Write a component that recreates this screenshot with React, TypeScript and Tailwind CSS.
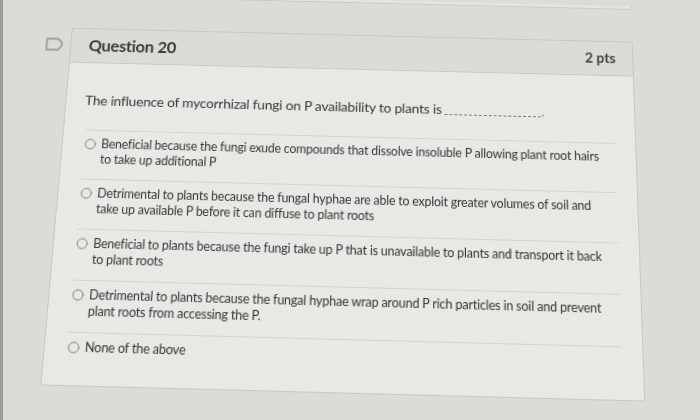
import { Circle } from 'lucide-react';

const answers = [
  { l1: 'Beneficial because the fungi exude compounds that dissolve insoluble P allowing plant root hairs', l2: 'to take up additional P' },
  { l1: 'Detrimental to plants because the fungal hyphae are able to exploit greater volumes of soil and', l2: 'take up available P before it can diffuse to plant roots' },
  { l1: 'Beneficial to plants because the fungi take up P that is unavailable to plants and transport it back', l2: 'to plant roots' },
  { l1: 'Detrimental to plants because the fungal hyphae wrap around P rich particles in soil and prevent', l2: 'plant roots from accessing the P.' },
  { l1: 'None of the above', l2: '' },
];

export default function App() {
  return (
    <div className="relative w-[700px] h-[420px] overflow-hidden bg-[#dcdbd7] border-l-[3px] border-[#9d9c98] font-['Lato',sans-serif] text-[#3b3b3b]">
      {/* photo of a screen: the page is seen at a slight angle */}
      <div className="-ml-[3px] w-[700px] h-[420px] origin-[347px_212px] [transform:perspective(1000px)_rotateX(12deg)_rotate(1.5deg)]">
        {/* bottom of the previous question */}
        <div className="-mt-[14px] ml-[57px] w-[581px] h-[4px] border-b border-x border-[#c9c8c4] bg-[#e4e3df]" />

        <div className="flex mt-[35px]">
          {/* flag */}
          <div className="w-[57px] flex justify-end pr-[7px] pt-[11px]">
            <svg width="19" height="15" viewBox="0 0 19 15" fill="none">
              <path d="M1.5 1.5 H13 L17 5.5 V9.5 L13 13.5 H1.5 Z" stroke="#9c9b98" strokeWidth="1.8" strokeLinejoin="round" />
            </svg>
          </div>

          {/* card */}
          <div className="w-[581px] h-[365px] border border-[#c8c7c3] bg-[#e9e8e5] flex flex-col">
            <div className="h-[38px] bg-[#dcdbd7] border-b border-[#c8c7c3] flex items-center justify-between pl-[18px] pr-[17px]">
              <span className="text-[17px] font-bold tracking-[-0.3px] text-[#3a3a3a]">Question 20</span>
              <span className="text-[14.5px] font-bold text-[#444]">2 pts</span>
            </div>

            <div className="pl-[19px] pr-[20px] pt-[29px]">
              <p className="text-[14px] text-[#363636] tracking-[-0.2px]">
                The influence of mycorrhizal fungi on P availability to plants is{' '}
                <span className="inline-block w-[98px] border-b border-dashed border-[#777] translate-y-[1px]" />
                <span className="text-[#888]">.</span>
              </p>

              <div className="mt-[21px] flex flex-col pl-[3px]">
                {answers.map((a, i) => (
                  <div
                    key={i}
                    className="h-[51px] border-t border-[#d3d2ce] flex items-start gap-[5px] pt-[6px]"
                  >
                    <Circle className="w-[12px] h-[12px] mt-[2px] shrink-0 text-[#85847f]" strokeWidth={2} />
                    <span className="text-[12.4px] leading-[16px] text-[#363636] tracking-[-0.2px] whitespace-nowrap">
                      {a.l1}
                      {a.l2 && <br />}
                      {a.l2}
                    </span>
                  </div>
                ))}
              </div>
            </div>
          </div>
        </div>
      </div>
    </div>
  );
}
